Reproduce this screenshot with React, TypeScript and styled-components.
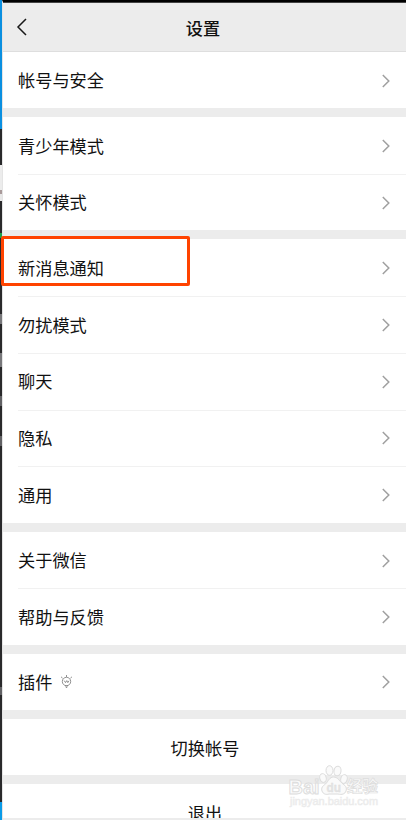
import React from "react";
import styled, { createGlobalStyle } from "styled-components";

const GlobalStyle = createGlobalStyle`
  * { box-sizing: border-box; }
  body { margin: 0; background: #fff; overflow: hidden; }
`;

const Screen = styled.div`
  position: relative;
  display: flex;
  width: 406px;
  height: 820px;
  overflow: hidden;
  font-family: "Noto Sans CJK SC", sans-serif;
  color: #111;
`;

const Edge = styled.div`
  display: flex;
  flex-direction: column;
  flex: 0 0 2px;
`;

const EdgePart = styled.div<{ $h: number; $color: string }>`
  flex: 0 0 ${(p) => p.$h}px;
  background: ${(p) => p.$color};
`;

const Phone = styled.main`
  display: flex;
  flex-direction: column;
  flex: 1;
  background: #ececec;
  border-top: 2px solid #000;
  border-left: 1px solid #e4e4e4;
`;

const Header = styled.header`
  display: grid;
  grid-template-columns: 40px 1fr 43px;
  align-items: center;
  flex: 0 0 50px;
  border-top: 1px solid #444;
  border-bottom: 1px solid #dedede;
`;

const Title = styled.h1`
  margin: 2px 0 0;
  font-size: 17.2px;
  line-height: 24px;
  font-weight: 500;
  text-align: center;
`;

const Back = styled.svg`
  margin: 0 0 0 13px;
  width: 12px;
  height: 20px;
`;

const Group = styled.section<{ $h: number }>`
  display: flex;
  flex-direction: column;
  flex: 0 0 ${(p) => p.$h}px;
  margin-bottom: 9px;
  background: #fff;
`;

const Row = styled.div`
  display: flex;
  align-items: center;
  flex: 1 0 0;
  margin-left: 15px;
  padding-right: 15px;
  & + & { box-shadow: inset 0 1px 0 #f1f1f1; }
`;

const Label = styled.span`
  flex: 1;
  display: flex;
  align-items: center;
  padding-top: 0.4px;
  font-size: 17.2px;
  line-height: 24px;
`;

const Chevron = styled.svg`
  margin-top: 1px;
  width: 10px;
  height: 16px;
`;

const Bulb = styled.svg`
  margin: -1px 0 0 8px;
  width: 13px;
  height: 15px;
`;

const Action = styled.section<{ $h: number }>`
  flex: 0 0 ${(p) => p.$h}px;
  margin-bottom: 9px;
  padding-top: 17px;
  padding-left: 1px;
  background: #fff;
  text-align: center;
  font-size: 17.2px;
  line-height: 24px;
  overflow: hidden;
`;

const Highlight = styled.div`
  position: absolute;
  left: 1px;
  top: 236px;
  width: 189px;
  height: 50px;
  border: 3px solid #ff4300;
  border-radius: 2px;
`;

const Watermark = styled.svg`
  position: absolute;
  left: 286px;
  top: 762px;
  width: 100px;
  height: 50px;
`;

const edge: [number, string][] = [
  [129, "#0a8fe0"], [36, "#29292b"], [25, "#ececec"], [4, "#a99a9a"], [7, "#e8e8e8"],
  [32, "#29292b"], [5, "#18a34a"], [76, "#29292b"], [10, "#77777a"], [29, "#29292b"],
  [14, "#77777a"], [29, "#29292b"], [10, "#606063"], [30, "#29292b"], [10, "#606063"],
  [241, "#29292b"], [8, "#606063"], [107, "#29292b"], [18, "#0a9be8"],
];

const groups: { h: number; items: string[] }[] = [
  { h: 56, items: ["帐号与安全"] },
  { h: 113.4, items: ["青少年模式", "关怀模式"] },
  { h: 283.6, items: ["新消息通知", "勿扰模式", "聊天", "隐私", "通用"] },
  { h: 113, items: ["关于微信", "帮助与反馈"] },
  { h: 56, items: ["插件"] },
];

const BulbIcon = () => (
  <Bulb viewBox="0 0 13 15" fill="none" stroke="#777" strokeWidth=".8">
    <circle cx="6.5" cy="7.5" r="4.2" />
    <path d="M6.5 1v2M1 2.8l1.6 1.4M12 2.8l-1.6 1.4M4.2 6.6l1.3 2L6.8 6.6l1 2L9 6.8M5 12h3M5.8 13.5h1.4" />
  </Bulb>
);

export default function App() {
  return (
    <Screen>
      <GlobalStyle />
      <Edge>
        {edge.map(([h, color], i) => <EdgePart key={i} $h={h} $color={color} />)}
      </Edge>
      <Phone>
        <Header>
          <Back viewBox="0 0 12 20" fill="none" stroke="#181818" strokeWidth="1.5">
            <path d="M10 2L2 10l8 8" />
          </Back>
          <Title>设置</Title>
        </Header>
        {groups.map((g) => (
          <Group key={g.items[0]} $h={g.h}>
            {g.items.map((item) => (
              <Row key={item}>
                <Label>{item}{item === "插件" && <BulbIcon />}</Label>
                <Chevron viewBox="0 0 10 16" fill="none" stroke="#a0a0a0" strokeWidth="1.5">
                  <path d="M1.8 2l6 6-6 6" />
                </Chevron>
              </Row>
            ))}
          </Group>
        ))}
        <Action $h={56}>切换帐号</Action>
        <Action $h={34}>退出</Action>
      </Phone>
      <Highlight />
      <Watermark viewBox="0 0 100 50" fill="#fafafa" stroke="#dcdcdc" strokeWidth="1">
        <g>
          <ellipse cx="37" cy="16" rx="3.2" ry="4.4" transform="rotate(-15 37 16)" />
          <ellipse cx="43.5" cy="8.5" rx="3.5" ry="4.8" />
          <ellipse cx="51.5" cy="9" rx="3.5" ry="4.8" transform="rotate(10 51.5 9)" />
          <ellipse cx="58" cy="17" rx="3.2" ry="4.4" transform="rotate(15 58 17)" />
          <path d="M47.5 15c-4 0-5 4-8 7-3 2-4.500 4-3.500 7s4 4 7 3h9c4 1 7 0 8-3s0-5-3-7c-4-3-5-7-9.500-7z" />
        </g>
        <g fontFamily="Liberation Sans, sans-serif">
          <text x="2.500" y="31.500" fontSize="20" fontWeight="700" textLength="31" lengthAdjust="spacingAndGlyphs" strokeWidth=".9">Bai</text>
          <text x="40.500" y="29.500" fontSize="13" fontWeight="700" textLength="14.500" lengthAdjust="spacingAndGlyphs" strokeWidth=".3" fill="#e4e4e4">du</text>
          <text x="61" y="30" fontSize="15.500" fontWeight="700" strokeWidth=".7" fontFamily="Noto Sans CJK SC, sans-serif">经验</text>
          <text x="4" y="43" fontSize="10.500" textLength="88" lengthAdjust="spacingAndGlyphs" strokeWidth=".5" fill="#f0f0f0" stroke="#ebebeb">jingyan.baidu.com</text>
        </g>
      </Watermark>
    </Screen>
  );
}
